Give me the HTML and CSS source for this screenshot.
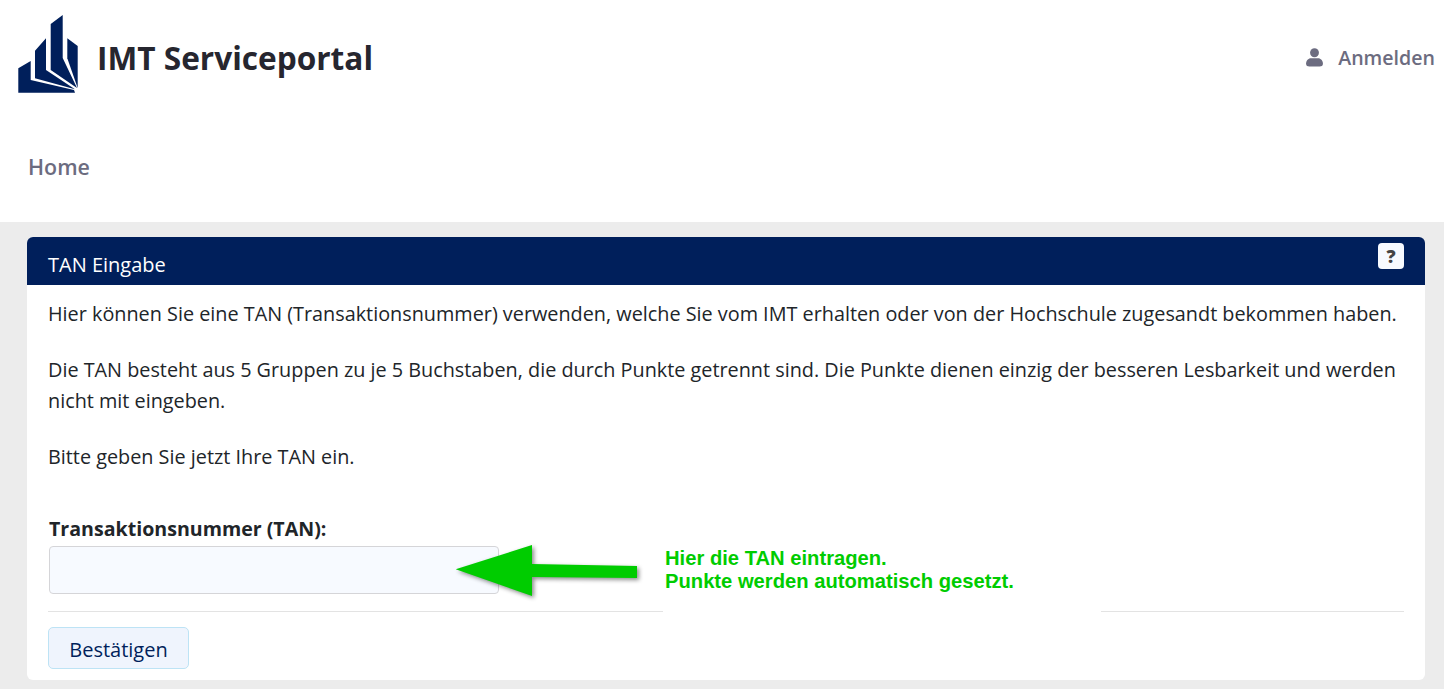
FILE: index.html
```html
<!DOCTYPE html>
<html lang="de">
<head>
  <meta charset="UTF-8" />
  <title>IMT Serviceportal</title>
  <link rel="stylesheet" href="styles.css">
</head>
<body>
  <header class="site-header">
    <div class="top-bar">
      <a class="brand" href="#">
        <svg class="brand-logo" viewBox="0 0 60 78" aria-hidden="true">
          <path d="M0.3 53.3 L12.7 46 L12.7 65 L56 75 L57 77.7 L0.3 77.7 Z" />
          <path d="M17 35.7 L28 23.3 L28 55 L57 74.3 L17 63.3 Z" />
          <path d="M32.7 9 L44.7 0 L44.7 43 L59 73 L32.7 55 Z" />
          <path d="M49.3 23.3 L59.7 31 L59.7 73 L49.3 43.3 Z" />
        </svg>
        <span class="brand-name">IMT Serviceportal</span>
      </a>
      <a class="login-link" href="#">
        <svg class="login-icon" viewBox="0 0 16 18" aria-hidden="true">
          <circle cx="8" cy="4.5" r="4.2" />
          <path d="M0 15 C0 11 3 9.6 4.5 9.6 H11.5 C13 9.6 16 11 16 15 C16 17 14.5 17.6 13 17.6 H3 C1.5 17.6 0 17 0 15 Z" />
        </svg>
        Anmelden
      </a>
    </div>
    <nav class="main-nav">
      <a href="#">Home</a>
    </nav>
  </header>

  <main class="content">
    <section class="card">
      <div class="card-title">
        <h1>TAN Eingabe</h1>
        <button class="help-btn" type="button">?</button>
      </div>
      <div class="card-body">
        <p>Hier können Sie eine TAN (Transaktionsnummer) verwenden, welche Sie vom IMT erhalten oder von der Hochschule zugesandt bekommen haben.</p>
        <p>Die TAN besteht aus 5 Gruppen zu je 5 Buchstaben, die durch Punkte getrennt sind. Die Punkte dienen einzig der besseren Lesbarkeit und werden nicht mit eingeben.</p>
        <p>Bitte geben Sie jetzt Ihre TAN ein.</p>

        <form class="tan-form" onsubmit="event.preventDefault()">
          <label for="tan">Transaktionsnummer (TAN):</label>
          <input type="text" id="tan" />
          <hr />
          <button class="submit-btn" type="submit">Bestätigen</button>
        </form>

        <!-- Annotation laid over the form -->
        <div class="hint">
          <svg class="hint-arrow" viewBox="0 0 192 66" aria-hidden="true">
            <path class="hint-fill" d="M0.7 25.3 L77 1 L77 20 L182 22 L182 34 L77 33 L77 52 Z" />
          </svg>
          <div class="hint-text">Hier die TAN eintragen.<br>Punkte werden automatisch gesetzt.</div>
        </div>
      </div>
    </section>
  </main>
</body>
</html>
```

FILE: styles.css
```css
html, body {
  height: 100%;
}

body {
  margin: 0;
  height: 689px;
  overflow: hidden;
  font-family: "Open Sans", "Noto Sans", sans-serif;
  font-size: 20px;
  color: #212529;
  background: #ececec;
}

a {
  text-decoration: none;
}

.site-header {
  height: 222px;
  background: #fff;
  box-sizing: border-box;
  padding: 15px 9px 0 18px;
}

.top-bar {
  display: flex;
  align-items: center;
  justify-content: space-between;
  height: 78px;
}

.brand {
  display: flex;
  align-items: center;
  gap: 19px;
}

.brand-logo {
  width: 60px;
  height: 78px;
  fill: #001f5b;
}

.brand-name {
  font-size: 31.6px;
  font-weight: 700;
  color: #26262f;
  margin-top: 6px;
}

.login-link {
  display: flex;
  align-items: center;
  gap: 15px;
  margin-top: 6px;
  font-size: 19.6px;
  font-weight: 600;
  color: #6c6c80;
}

.login-icon {
  width: 17px;
  height: 19px;
  fill: #6c6c80;
}

.main-nav {
  padding: 59px 0 0 10px;
  font-size: 21.4px;
  font-weight: 600;
}

.main-nav a {
  color: #6c6c80;
}

.content {
  padding: 15px 19px 0 27px;
}

.card {
  height: 443px;
  background: #fff;
  border-radius: 6px;
  overflow: hidden;
}

.card-title {
  display: flex;
  justify-content: space-between;
  height: 48px;
  box-sizing: border-box;
  padding: 6px 21px 0;
  background: #001f5b;
}

.card-title h1 {
  margin: 8px 0 0;
  font-size: 20px;
  font-weight: 400;
  color: #fff;
}

.help-btn {
  width: 26px;
  height: 26px;
  padding: 0;
  border: none;
  border-radius: 4px;
  background: #f7faff;
  color: #444;
  font-family: "Open Sans", sans-serif;
  font-size: 18px;
  font-weight: 800;
}

.card-body {
  position: relative;
  padding: 13px 21px 0;
  font-size: 19.82px;
  line-height: 31px;
}

.card-body p {
  margin: 0 0 25px;
}

.tan-form {
  margin-top: 41px;
}

.tan-form label {
  display: block;
  margin: 0 0 2px 1px;
  font-size: 19.6px;
  font-weight: 700;
  line-height: 31px;
}

.tan-form input {
  display: block;
  width: 450px;
  height: 48px;
  box-sizing: border-box;
  margin-left: 1px;
  border: 1px solid #d5d5d8;
  border-radius: 4px;
  background: #f7faff;
}

.tan-form hr {
  margin: 17px 0 15px;
  border: none;
  border-top: 1px solid #e3e3e3;
}

.submit-btn {
  width: 141px;
  height: 42px;
  padding: 2px 0 0;
  border: 1px solid #bde3f5;
  border-radius: 5px;
  background: #eff4fd;
  color: #001f5b;
  font-family: inherit;
  font-size: 20px;
}

.hint {
  position: absolute;
  left: 428px;
  top: 259px;
  display: flex;
  width: 646px;
  height: 68px;
}

.hint-arrow {
  width: 192px;
  height: 66px;
  flex: none;
  overflow: visible;
  filter: drop-shadow(2px 2px 2px rgba(0, 0, 0, 0.45));
}

.hint-fill {
  fill: #00cc00;
}

.hint-text {
  flex: 1;
  margin-left: 16px;
  padding: 3px 0 0 2px;
  background: #fff;
  font-family: "Liberation Sans", Arial, sans-serif;
  font-size: 20.2px;
  font-weight: 700;
  line-height: 22.5px;
  color: #00cc00;
}
```
